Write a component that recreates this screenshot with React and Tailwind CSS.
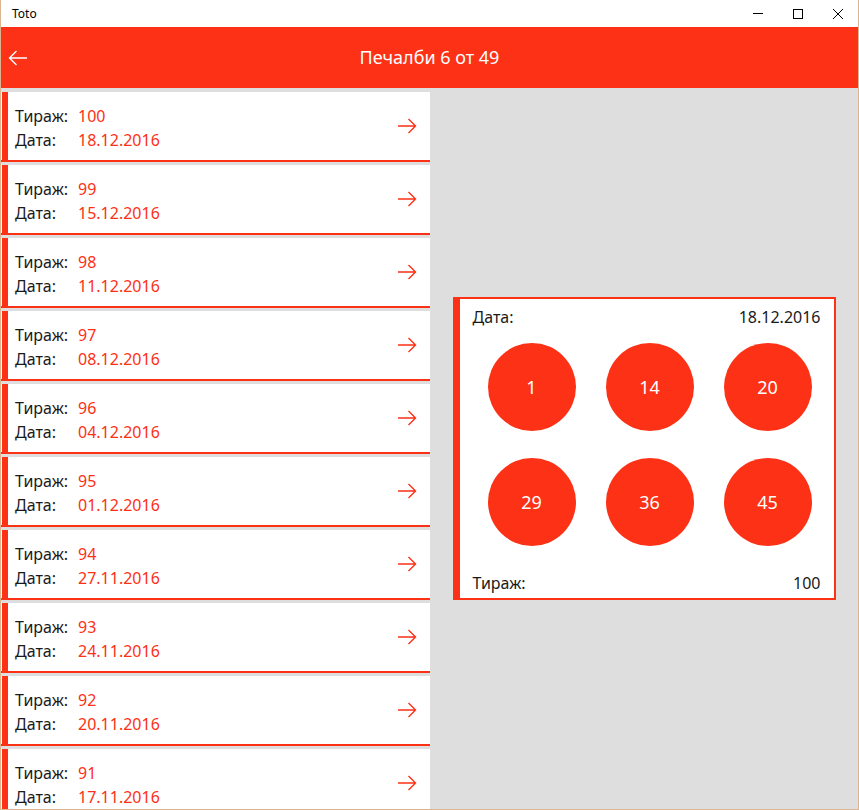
import React from 'react';

const RED = 'bg-[#fc3115]';

const draws = [
  { no: 100, date: '18.12.2016' },
  { no: 99, date: '15.12.2016' },
  { no: 98, date: '11.12.2016' },
  { no: 97, date: '08.12.2016' },
  { no: 96, date: '04.12.2016' },
  { no: 95, date: '01.12.2016' },
  { no: 94, date: '27.11.2016' },
  { no: 93, date: '24.11.2016' },
  { no: 92, date: '20.11.2016' },
  { no: 91, date: '17.11.2016' },
];

const balls = [1, 14, 20, 29, 36, 45];

const Arrow = ({ className, flip }) => (
  <svg
    width="20"
    height="16"
    viewBox="0 0 20 16"
    className={className}
    style={flip ? { transform: 'scaleX(-1)' } : undefined}
  >
    <path d="M1 8H18.5M11.5 1L18.5 8L11.5 15" fill="none" stroke="currentColor" strokeWidth="1.4" />
  </svg>
);

const TitleBar = () => (
  <div className="h-[27px] bg-white flex items-center justify-between shrink-0">
    <span className="pl-[11px] text-[12px] text-black">Toto</span>
    <div className="flex items-center h-full">
      <div className="w-[40px] h-full flex items-center justify-center">
        <div className="w-[10px] h-px bg-black" />
      </div>
      <div className="w-[40px] h-full flex items-center justify-center">
        <div className="w-[10px] h-[10px] border border-black" />
      </div>
      <div className="w-[40px] h-full flex items-center justify-center">
        <svg width="10" height="10" viewBox="0 0 10 10">
          <path d="M0 0L10 10M10 0L0 10" stroke="black" strokeWidth="1" />
        </svg>
      </div>
    </div>
  </div>
);

const DrawCard = ({ no, date }) => (
  <div className="flex h-[70px] shrink-0 bg-white border-b-2 border-[#fc3115]">
    <div className={`w-[6px] ${RED} ml-px shrink-0`} />
    <div className="flex-1 flex items-center justify-between pl-[7px] pr-[13px] pt-[4px]">
      <div className="text-[16px] leading-[24px]">
        <div className="flex">
          <span className="w-[63px] text-[#1a1a1a]">Тираж:</span>
          <span className="text-[#fc3115]">{no}</span>
        </div>
        <div className="flex">
          <span className="w-[63px] text-[#1a1a1a]">Дата:</span>
          <span className="text-[#fc3115]">{date}</span>
        </div>
      </div>
      <Arrow className="text-[#fc3115] mb-[4px]" />
    </div>
  </div>
);

const DetailPanel = () => (
  <div className="w-[383px] h-[303px] flex bg-white border-2 border-[#fc3115] border-l-0">
    <div className={`w-[7px] ${RED} shrink-0`} />
    <div className="flex-1 flex flex-col pl-[13px] pr-[13px] pt-[6px] pb-[3px] text-[16px] text-[#1a1a1a]">
      <div className="flex justify-between leading-[24px]">
        <span>Дата:</span>
        <span>18.12.2016</span>
      </div>
      <div className="grid grid-cols-[88px_88px_88px] gap-x-[30px] gap-y-[27px] pt-[14px] pl-[15px]">
        {balls.map((b) => (
          <div
            key={b}
            className={`w-[88px] h-[88px] rounded-full ${RED} flex items-center justify-center text-white text-[18px]`}
          >
            {b}
          </div>
        ))}
      </div>
      <div className="mt-auto flex justify-between leading-[24px]">
        <span>Тираж:</span>
        <span>100</span>
      </div>
    </div>
  </div>
);

export default function App() {
  return (
    <div
      className="w-[859px] h-[810px] flex flex-col border border-t-0 border-[#dcb48e] bg-[#dedede] overflow-hidden"
      style={{ fontFamily: '"Noto Sans", "Open Sans", sans-serif' }}
    >
      <TitleBar />
      <div className={`h-[61px] ${RED} flex items-center relative shrink-0`}>
        <Arrow className="text-white absolute left-[7px]" flip />
        <div className="flex-1 text-center text-white text-[18px]">Печалби 6 от 49</div>
      </div>
      <div className="flex flex-1 min-h-0">
        <div className="w-[429px] flex flex-col gap-[3px] pt-[4px] overflow-hidden shrink-0">
          {draws.map((d) => (
            <DrawCard key={d.no} {...d} />
          ))}
        </div>
        <div className="flex-1 flex items-center justify-center">
          <DetailPanel />
        </div>
      </div>
    </div>
  );
}
